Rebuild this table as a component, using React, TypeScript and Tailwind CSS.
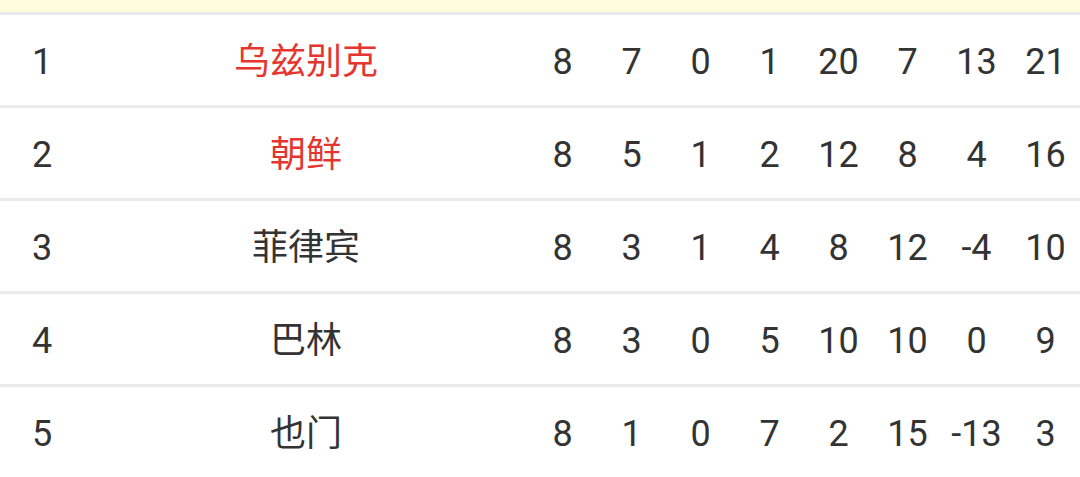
import React from 'react'

type Row = {
    rank: number
    team: string
    highlight: boolean
    stats: string[]
}

const rows: Row[] = [
    { rank: 1, team: '乌兹别克', highlight: true, stats: ['8', '7', '0', '1', '20', '7', '13', '21'] },
    { rank: 2, team: '朝鲜', highlight: true, stats: ['8', '5', '1', '2', '12', '8', '4', '16'] },
    { rank: 3, team: '菲律宾', highlight: false, stats: ['8', '3', '1', '4', '8', '12', '-4', '10'] },
    { rank: 4, team: '巴林', highlight: false, stats: ['8', '3', '0', '5', '10', '10', '0', '9'] },
    { rank: 5, team: '也门', highlight: false, stats: ['8', '1', '0', '7', '2', '15', '-13', '3'] },
]

export default function App() {

    return (
        <div
            className="w-[1080px] h-[477px] overflow-hidden bg-white text-[36px] text-[#333333]"
            style={{ fontFamily: 'Roboto, "Noto Sans CJK SC", sans-serif' }}
        >
            {/* notice strip at top */}
            <div className="h-[12px] bg-[#fffcdc]" />
            <div className="h-[3px] bg-[#e9e9ee]" />

            {rows.map((row, i) => (
                <div key={row.rank} className={i > 0 ? 'border-t-[3px] border-[#ebebeb]' : ''}>
                    <div className="grid grid-cols-[84px_444px_repeat(8,69px)] h-[90px] pt-[3px] items-center">
                        <div className="text-center leading-none">{row.rank}</div>
                        <div className={`text-center leading-none ${row.highlight ? 'text-[#e53530]' : ''}`}>
                            {row.team}
                        </div>
                        {row.stats.map((s, j) => (
                            <div key={j} className="text-center leading-none whitespace-nowrap">{s}</div>
                        ))}
                    </div>
                </div>
            ))}
        </div>
    )
}
